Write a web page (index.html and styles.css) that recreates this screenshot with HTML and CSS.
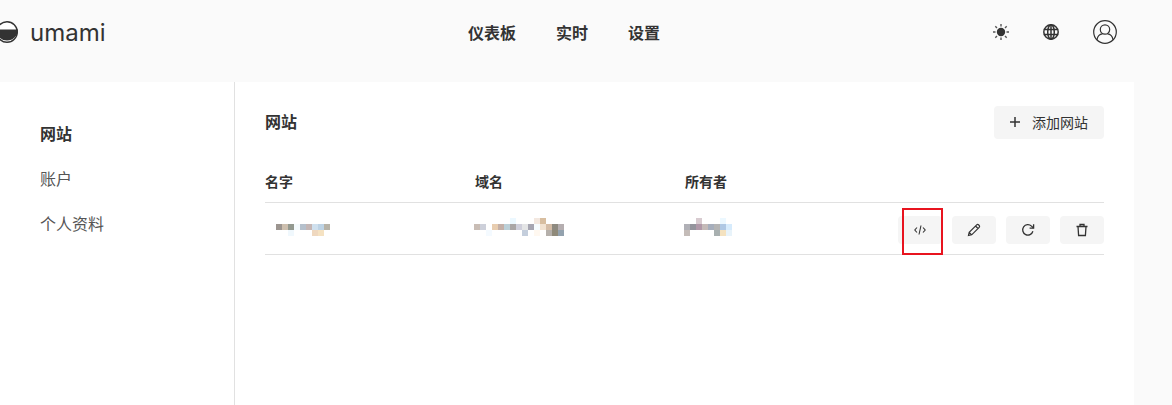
FILE: index.html
```html
<!DOCTYPE html>
<html lang="zh">
<head>
    <meta charset="UTF-8">
    <meta name="viewport" content="width=device-width, initial-scale=1.0">
    <title>umami</title>
    <link rel="stylesheet" href="styles.css">
</head>
<body>
    <div class="page">
        <header class="header">
            <div class="logo">
                <svg class="logo-mark" viewBox="0 0 22 22">
                    <circle cx="11" cy="11" r="10.300" fill="#fff" stroke="#333" stroke-width="1.400"/>
                    <path d="M0 8.500h22A11 11 0 0 1 0 8.500z" fill="#333"/>
                </svg>
                <span>umami</span>
            </div>
            <nav class="nav">
                <a>仪表板</a>
                <a>实时</a>
                <a>设置</a>
            </nav>
            <div class="tools">
                <svg class="icon-16" viewBox="0 0 16 16">
                    <circle cx="8" cy="8" r="4.200" fill="#333"/>
                    <path d="M8 0v2.500M8 13.500V16M0 8h2.500M13.500 8H16M2.300 2.300l1.700 1.700M12 12l1.700 1.700M2.300 13.700L4 12M12 4l1.700-1.700" stroke="#555" stroke-width="1.400" fill="none"/>
                </svg>
                <svg class="icon-16" viewBox="0 0 16 16" fill="none" stroke="#333" stroke-width="1.500">
                    <circle cx="8" cy="8" r="7.200"/>
                    <ellipse cx="8" cy="8" rx="3.300" ry="7.200"/>
                    <path d="M.8 5.500h14.400M.8 10.500h14.400M8 .8v14.400"/>
                </svg>
                <svg class="icon-24" viewBox="0 0 24 24" fill="none" stroke="#333" stroke-width="1.200">
                    <circle cx="12" cy="12" r="11.300"/>
                    <circle cx="12" cy="9.500" r="4.700"/>
                    <path d="M3.900 20c.6-3.800 3.300-5.900 5.600-6.100M20.100 20c-.6-3.800-3.300-5.900-5.600-6.100"/>
                </svg>
            </div>
        </header>

        <div class="content">
            <aside class="sidebar">
                <a class="active">网站</a>
                <a>账户</a>
                <a>个人资料</a>
            </aside>
            <main class="main">
                <div class="title-row">
                    <h2>网站</h2>
                    <button class="btn add-btn">
                        <svg class="icon-10" viewBox="0 0 10 10"><path d="M5 0v10M0 5h10" stroke="#333" stroke-width="1.500" fill="none"/></svg>
                        <span>添加网站</span>
                    </button>
                </div>
                <div class="row head">
                    <div>名字</div>
                    <div>域名</div>
                    <div>所有者</div>
                </div>
                <div class="row body-row">
                    <svg class="mosaic" width="66" height="28">
                        <rect x="11" y="8" width="6" height="6" fill="#9c9590"/>
                        <rect x="17" y="8" width="6" height="6" fill="#cdbfae"/>
                        <rect x="23" y="8" width="6" height="6" fill="#93998f"/>
                        <rect x="29" y="8" width="6" height="6" fill="#f4fafc"/>
                        <rect x="35" y="8" width="6" height="6" fill="#b5c0cc"/>
                        <rect x="41" y="8" width="6" height="6" fill="#c4b6b5"/>
                        <rect x="47" y="8" width="6" height="6" fill="#cfe0ee"/>
                        <rect x="53" y="8" width="6" height="6" fill="#bdd3e5"/>
                        <rect x="59" y="8" width="6" height="6" fill="#b7b3a8"/>
                        <rect x="23" y="14" width="6" height="6" fill="#f0f8fd"/>
                        <rect x="47" y="14" width="6" height="6" fill="#efd8bf"/>
                        <rect x="53" y="14" width="6" height="6" fill="#f5e2c2"/>
                    </svg>
                    <svg class="mosaic" width="90" height="28">
                        <rect x="-1" y="8" width="6" height="6" fill="#c9bdb5"/>
                        <rect x="5" y="8" width="6" height="6" fill="#cdd0da"/>
                        <rect x="17" y="8" width="6" height="6" fill="#e8cdb0"/>
                        <rect x="23" y="8" width="6" height="6" fill="#c4b0a8"/>
                        <rect x="29" y="8" width="6" height="6" fill="#bcd0d8"/>
                        <rect x="35" y="8" width="6" height="6" fill="#aaa6a6"/>
                        <rect x="41" y="8" width="6" height="6" fill="#cfcfdb"/>
                        <rect x="47" y="8" width="6" height="6" fill="#e4e5e6"/>
                        <rect x="53" y="8" width="6" height="6" fill="#a6a6b2"/>
                        <rect x="59" y="8" width="6" height="6" fill="#f6fcff"/>
                        <rect x="65" y="8" width="6" height="6" fill="#f2e2d0"/>
                        <rect x="71" y="8" width="6" height="6" fill="#d4bca6"/>
                        <rect x="77" y="8" width="6" height="6" fill="#8e8a80"/>
                        <rect x="83" y="8" width="6" height="6" fill="#b5aeb0"/>
                        <rect x="35" y="2" width="6" height="6" fill="#ecf8ff"/>
                        <rect x="59" y="2" width="6" height="6" fill="#f3e8e0"/>
                        <rect x="65" y="2" width="6" height="6" fill="#d8bea0"/>
                        <rect x="11" y="14" width="6" height="6" fill="#f4faff"/>
                        <rect x="47" y="14" width="6" height="6" fill="#c4cedc"/>
                        <rect x="59" y="14" width="6" height="6" fill="#fff8f0"/>
                        <rect x="71" y="14" width="6" height="6" fill="#b5b0ab"/>
                        <rect x="77" y="14" width="6" height="6" fill="#8f8a7a"/>
                        <rect x="83" y="14" width="6" height="6" fill="#93a2ae"/>
                    </svg>
                    <svg class="mosaic" width="48" height="28">
                        <rect x="-1" y="8" width="6" height="6" fill="#b0b0b6"/>
                        <rect x="5" y="8" width="6" height="6" fill="#94949c"/>
                        <rect x="11" y="8" width="6" height="6" fill="#b098a8"/>
                        <rect x="17" y="8" width="6" height="6" fill="#c4bab8"/>
                        <rect x="23" y="8" width="6" height="6" fill="#a6aebc"/>
                        <rect x="29" y="8" width="6" height="6" fill="#b4b4b4"/>
                        <rect x="35" y="8" width="6" height="6" fill="#afc8e4"/>
                        <rect x="41" y="8" width="6" height="6" fill="#d6ebfc"/>
                        <rect x="11" y="2" width="6" height="6" fill="#d8cbd0"/>
                        <rect x="35" y="2" width="6" height="6" fill="#ecf8ff"/>
                        <rect x="-1" y="14" width="6" height="6" fill="#c4bcb8"/>
                        <rect x="29" y="14" width="6" height="6" fill="#a8b0b0"/>
                        <rect x="35" y="14" width="6" height="6" fill="#f4e2c0"/>
                        <rect x="41" y="14" width="6" height="6" fill="#e8f3fa"/>
                    </svg>
                    <div class="actions">
                        <div class="code-wrap">
                            <button class="btn icon-btn">
                                <svg class="icon-12" viewBox="0 0 12 12" fill="none" stroke="#333" stroke-width="1.100"><path d="M3 3.500.8 6 3 8.500M9 3.500 11.200 6 9 8.500M7 1.500 5 10.500"/></svg>
                            </button>
                            <div class="highlight"></div>
                        </div>
                        <button class="btn icon-btn">
                            <svg class="icon-14" viewBox="0 0 14 14" fill="none" stroke="#333" stroke-width="1.200"><path d="M1.500 12.500l.7-3.200L9.700 1.800a1.300 1.300 0 0 1 1.800 0l.7.7a1.300 1.300 0 0 1 0 1.800L4.700 11.800zM8.500 3l2.500 2.500M2.200 9.300l2.500 2.500"/></svg>
                        </button>
                        <button class="btn icon-btn">
                            <svg class="icon-14" viewBox="0 0 14 14" fill="none" stroke="#333" stroke-width="1.300"><path d="M11.900 8.300A5.200 5.200 0 1 1 10.500 3.100L12.500 5"/><path d="M12.600 1.200v4h-4"/></svg>
                        </button>
                        <button class="btn icon-btn">
                            <svg class="icon-14" viewBox="0 0 14 14" fill="none" stroke="#333" stroke-width="1.300"><path d="M1.500 3.500h11M5 3.500V1.500h4v2M3 3.500l.6 9h6.800l.6-9"/></svg>
                        </button>
                    </div>
                </div>
            </main>
        </div>
    </div>
</body>
</html>
```

FILE: styles.css
```css
*{
    box-sizing: border-box;
}
body{
    margin: 0;
    height: 405px;
    overflow: hidden;
    background: #fafafa;
    color: #333;
    font-family: Inter, "Noto Sans CJK SC", sans-serif;
    font-size: 14px;
}
.page{
    width: 1158px;
    margin-left: -24px;
}
.header{
    display: grid;
    grid-template-columns: 472px 1fr auto;
    align-items: center;
    height: 82px;
    padding: 0 17px 18px 20px;
}
.logo{
    display: flex;
    align-items: center;
    gap: 12px;
    font-size: 24px;
}
.logo-mark{
    width: 22px;
    height: 22px;
}
.nav{
    display: flex;
    gap: 40px;
    font-size: 16px;
    font-weight: 700;
}
.tools{
    display: flex;
    align-items: center;
    gap: 34px;
}
.icon-10{
    width: 10px;
    height: 10px;
}
.icon-12{
    width: 12px;
    height: 12px;
}
.icon-14{
    width: 14px;
    height: 14px;
}
.icon-16{
    width: 16px;
    height: 16px;
}
.icon-24{
    width: 24px;
    height: 24px;
}
.content{
    display: flex;
    height: 323px;
    background: #fff;
}
.sidebar{
    display: flex;
    flex-direction: column;
    gap: 21px;
    width: 259px;
    padding: 40px 0 0 64px;
    border-right: 1px solid #e1e1e1;
    font-size: 16px;
    line-height: 24px;
    color: #555;
}
.sidebar .active{
    color: #333;
    font-weight: 700;
}
.main{
    flex: 1;
    padding: 24px 30px 0;
}
.title-row{
    display: flex;
    justify-content: space-between;
    align-items: center;
    height: 33px;
}
.title-row h2{
    margin: 0 0 4px;
    font-size: 16px;
    font-weight: 700;
}
.btn{
    display: flex;
    justify-content: center;
    align-items: center;
    border: 0;
    border-radius: 4px;
    background: #f5f5f5;
    color: #333;
    font-family: inherit;
    font-size: 14px;
}
.add-btn{
    gap: 12px;
    width: 110px;
    height: 33px;
    padding: 0 0 2px;
}
.row{
    display: grid;
    grid-template-columns: 210px 210px 210px 1fr;
    border-bottom: 1px solid #e1e1e1;
}
.head{
    height: 64px;
    padding-top: 32px;
    font-weight: 700;
}
.body-row{
    height: 52px;
    padding-top: 13px;
}
.mosaic{
    overflow: visible;
}
.actions{
    display: flex;
    justify-content: flex-end;
    gap: 10px;
    margin-left: -60px;
}
.icon-btn{
    width: 44px;
    height: 28px;
}
.code-wrap{
    position: relative;
}
.highlight{
    position: absolute;
    left: 4px;
    top: -8px;
    width: 41px;
    height: 47px;
    border: 2px solid #e8141f;
}
```
